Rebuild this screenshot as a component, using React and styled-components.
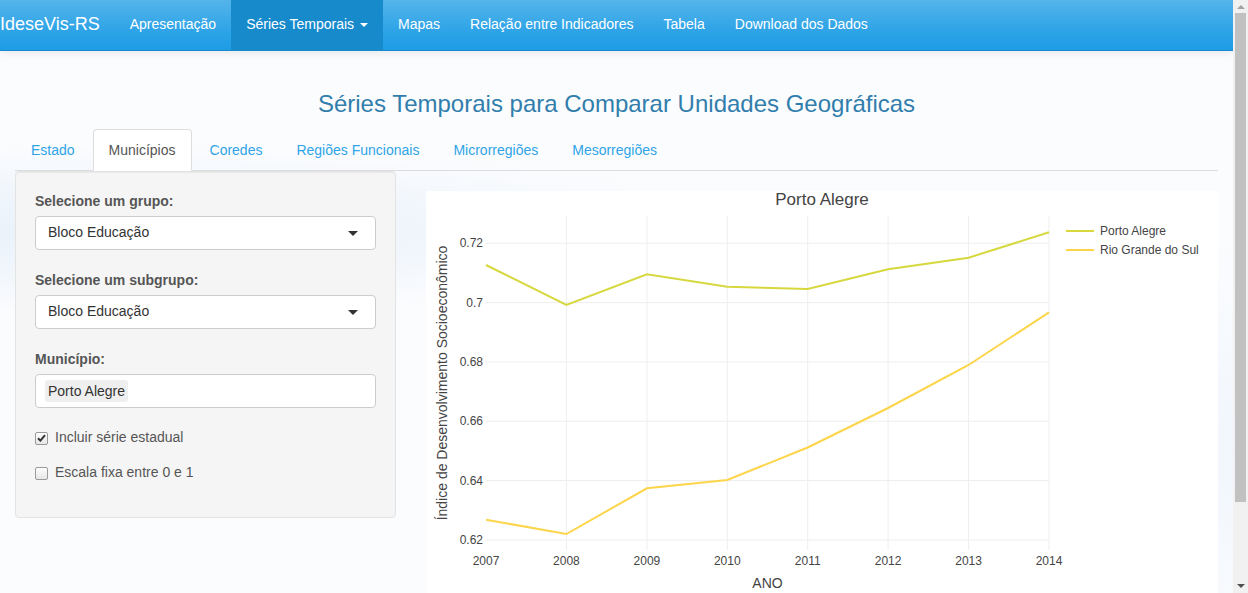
import styled, { createGlobalStyle } from "styled-components";

const GlobalStyle = createGlobalStyle`
  body {
    margin: 0;
    font-family: "Liberation Sans", Arial, sans-serif;
    font-size: 14px;
    line-height: 1.42857;
    color: #555;
    background-color: #fbfcfe;
    background-image:
      radial-gradient(ellipse 900px 120px at 120px 230px, rgba(214, 230, 246, 0.55), transparent 70%),
      radial-gradient(ellipse 500px 300px at 1150px 450px, rgba(232, 241, 251, 0.6), transparent 70%);
  }
  * {
    box-sizing: border-box;
  }
`;

const Shell = styled.div`
  display: flex;
  align-items: flex-start;
`;

const Main = styled.div`
  flex: 1;
  min-width: 0;
`;

const ScrollTrack = styled.div`
  position: sticky;
  top: 0;
  width: 15px;
  height: 593px;
  flex-shrink: 0;
  display: flex;
  flex-direction: column;
  align-items: center;
  background: #f1f1f1;
  padding: 0 2px;
`;

const Arrow = styled.div`
  width: 0;
  height: 0;
  margin: ${(p) => (p.$up ? "5px 0 4px" : "4px 0 5px")};
  border-left: 4px solid transparent;
  border-right: 4px solid transparent;
  ${(p) => (p.$up ? "border-bottom: 4px solid #a3a3a3;" : "border-top: 4px solid #505050;")}
`;

const Thumb = styled.div`
  width: 11px;
  height: 489px;
  background: #c1c1c1;
`;

const Gap = styled.div`
  flex: 1;
`;

const Navbar = styled.nav`
  display: flex;
  align-items: stretch;
  height: 51px;
  background-image: linear-gradient(#54b4eb, #2fa4e7 60%, #1d9ce5);
  border-bottom: 1px solid #178acc;
  box-shadow: 0 1px 10px rgba(0, 0, 0, 0.1);
`;

const Brand = styled.div`
  display: flex;
  align-items: center;
  padding: 0 15px 0 0;
  font-size: 18px;
  color: #fff;
`;

const NavList = styled.ul`
  display: flex;
  margin: 0;
  padding: 0;
  list-style: none;
`;

const NavItem = styled.li`
  display: flex;
  align-items: center;
  padding: 0 15px;
  height: 50px;
  color: #fff;
  font-size: 14px;
  background: ${(p) => (p.$active ? "#178acc" : "transparent")};
`;

const Caret = styled.span`
  display: inline-block;
  width: 0;
  height: 0;
  margin-left: 6px;
  border-top: ${(p) => p.$size || 4}px solid ${(p) => p.$color || "#fff"};
  border-left: ${(p) => p.$size || 4}px solid transparent;
  border-right: ${(p) => p.$size || 4}px solid transparent;
`;

const Page = styled.div`
  padding: 40px 15px 0;
`;

const Title = styled.h3`
  margin: 0 0 12px;
  font-size: 24px;
  font-weight: 500;
  line-height: 1.1;
  text-align: center;
  color: #317eac;
`;

const Tabs = styled.ul`
  display: flex;
  margin: 0;
  padding: 0;
  list-style: none;
  border-bottom: 1px solid #ddd;
`;

const Tab = styled.li`
  margin-right: 2px;
  margin-bottom: -1px;
  padding: 10px 15px;
  line-height: 20px;
  border: 1px solid ${(p) => (p.$active ? "#ddd" : "transparent")};
  border-bottom-color: ${(p) => (p.$active ? "#fff" : "transparent")};
  border-radius: 4px 4px 0 0;
  background: ${(p) => (p.$active ? "#fff" : "transparent")};
  color: ${(p) => (p.$active ? "#555" : "#2fa4e7")};
`;

const Row = styled.div`
  display: grid;
  grid-template-columns: 4fr 8fr;
  margin: 0 -15px;
`;

const Col = styled.div`
  padding: 0 15px;
`;

const Well = styled.div`
  background: #f5f5f5;
  border: 1px solid #e3e3e3;
  border-radius: 4px;
  box-shadow: inset 0 1px 1px rgba(0, 0, 0, 0.05);
  padding: 19px 19px 14px;
`;

const FormGroup = styled.div`
  margin-bottom: 20px;
`;

const Label = styled.label`
  display: block;
  margin-bottom: 5px;
  font-weight: bold;
  line-height: 20px;
  color: #555;
`;

const SelectBox = styled.div`
  display: flex;
  align-items: center;
  justify-content: space-between;
  height: 34px;
  padding: 0 17px 0 12px;
  background: #fff;
  border: 1px solid #ccc;
  border-radius: 4px;
  color: #333;
  font-size: 14px;
`;

const Chip = styled.span`
  margin-left: -3px;
  padding: 1px 3px;
  background: #efefef;
  border-radius: 3px;
  color: #333;
  line-height: 20px;
`;

const CheckRow = styled.label`
  display: flex;
  align-items: center;
  gap: 7px;
  height: 20px;
  margin-top: ${(p) => p.$mt || 0}px;
  margin-bottom: ${(p) => p.$mb || 0}px;
  color: #555;
`;

const Box = styled.span`
  display: inline-flex;
  align-items: center;
  justify-content: center;
  width: 13px;
  height: 13px;
  border: 1px solid #9a9a9a;
  border-radius: 2px;
  background: linear-gradient(#fdfdfd, #e6e6e6);
`;

const PlotFrame = styled.div`
  margin-top: 20px;
  background: #fff;
  height: 402px;
`;

const PA = [
  [60, 74],
  [140.4, 114],
  [220.9, 83.3],
  [301.3, 95.7],
  [381.7, 98],
  [462.1, 78.3],
  [542.6, 66.7],
  [623, 41.3],
];

const RS = [
  [60, 328.7],
  [140.4, 343],
  [220.9, 297.3],
  [301.3, 289],
  [381.7, 256.5],
  [462.1, 217],
  [542.6, 174],
  [623, 121.3],
];

const YEARS = [2007, 2008, 2009, 2010, 2011, 2012, 2013, 2014];
const YTICKS = ["0.72", "0.7", "0.68", "0.66", "0.64", "0.62"];

function Chart() {
  const pts = (arr) => arr.map((p) => p.join(",")).join(" ");
  return (
    <svg width="791" height="402" fontFamily="'Liberation Sans', Arial, sans-serif">
      {YEARS.slice(1).map((y, i) => (
        <line key={y} x1={PA[i + 1][0]} x2={PA[i + 1][0]} y1="25" y2="359" stroke="#eee" strokeWidth="1" />
      ))}
      {YTICKS.map((t, i) => {
        const y = 52.3 + i * 59.33;
        return (
          <g key={t}>
            <line x1="60" x2="623" y1={y} y2={y} stroke="#eee" strokeWidth="1" />
            <text x="57" y={y + 4} textAnchor="end" fontSize="12" fill="#444">
              {t}
            </text>
          </g>
        );
      })}
      {YEARS.map((y, i) => (
        <text key={y} x={PA[i][0]} y="374" textAnchor="middle" fontSize="12" fill="#444">
          {y}
        </text>
      ))}
      <polyline points={pts(PA)} fill="none" stroke="#d6d83e" strokeWidth="2" />
      <polyline points={pts(RS)} fill="none" stroke="#fdd54a" strokeWidth="2" />
      <text x="396" y="14" textAnchor="middle" fontSize="17" fill="#444">
        Porto Alegre
      </text>
      <text x="341.5" y="397" textAnchor="middle" fontSize="14" fill="#444">
        ANO
      </text>
      <text transform="translate(21 192) rotate(-90)" textAnchor="middle" fontSize="14" fill="#444">
        Índice de Desenvolvimento Socioeconômico
      </text>
      <line x1="640" x2="668" y1="40" y2="40" stroke="#d6d83e" strokeWidth="2" />
      <text x="674" y="44" fontSize="12" fill="#444">
        Porto Alegre
      </text>
      <line x1="640" x2="668" y1="59" y2="59" stroke="#fdd54a" strokeWidth="2" />
      <text x="674" y="63" fontSize="12" fill="#444">
        Rio Grande do Sul
      </text>
    </svg>
  );
}

export default function App() {
  return (
    <>
      <GlobalStyle />
      <Shell>
        <Main>
          <Navbar>
            <Brand>IdeseVis-RS</Brand>
            <NavList>
              <NavItem>Apresentação</NavItem>
              <NavItem $active>
                Séries Temporais
                <Caret />
              </NavItem>
              <NavItem>Mapas</NavItem>
              <NavItem>Relação entre Indicadores</NavItem>
              <NavItem>Tabela</NavItem>
              <NavItem>Download dos Dados</NavItem>
            </NavList>
          </Navbar>
          <Page>
            <Title>Séries Temporais para Comparar Unidades Geográficas</Title>
            <Tabs>
              <Tab>Estado</Tab>
              <Tab $active>Municípios</Tab>
              <Tab>Coredes</Tab>
              <Tab>Regiões Funcionais</Tab>
              <Tab>Microrregiões</Tab>
              <Tab>Mesorregiões</Tab>
            </Tabs>
            <Row>
              <Col>
                <Well>
                  <FormGroup>
                    <Label>Selecione um grupo:</Label>
                    <SelectBox>
                      Bloco Educação
                      <Caret $color="#333" $size={5} />
                    </SelectBox>
                  </FormGroup>
                  <FormGroup>
                    <Label>Selecione um subgrupo:</Label>
                    <SelectBox>
                      Bloco Educação
                      <Caret $color="#333" $size={5} />
                    </SelectBox>
                  </FormGroup>
                  <FormGroup>
                    <Label>Município:</Label>
                    <SelectBox>
                      <Chip>Porto Alegre</Chip>
                    </SelectBox>
                  </FormGroup>
                  <CheckRow $mt={1} $mb={15}>
                    <Box>
                      <svg width="9" height="8" viewBox="0 0 9 8">
                        <path d="M1 4.2 L3.4 6.6 L8 1.2" fill="none" stroke="#333" strokeWidth="2" />
                      </svg>
                    </Box>
                    Incluir série estadual
                  </CheckRow>
                  <CheckRow $mb={20}>
                    <Box />
                    Escala fixa entre 0 e 1
                  </CheckRow>
                </Well>
              </Col>
              <Col>
                <PlotFrame>
                  <Chart />
                </PlotFrame>
              </Col>
            </Row>
          </Page>
        </Main>
        <ScrollTrack>
          <Arrow $up />
          <Thumb />
          <Gap />
          <Arrow />
        </ScrollTrack>
      </Shell>
    </>
  );
}
